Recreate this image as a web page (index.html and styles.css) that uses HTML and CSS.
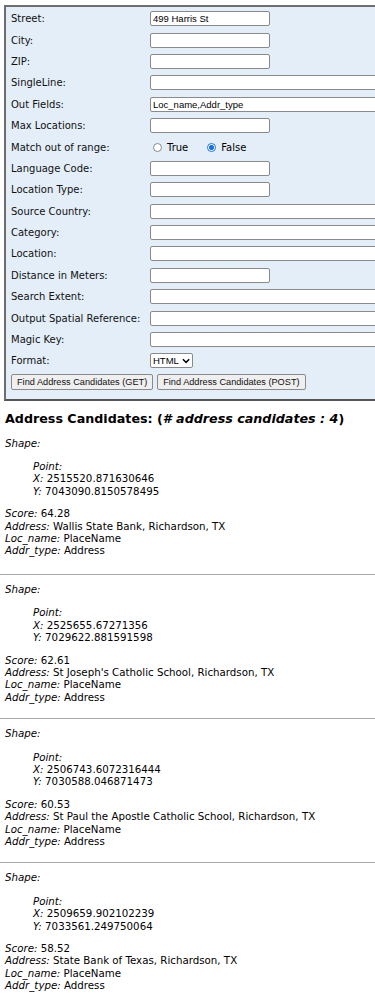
FILE: index.html
```html
<!DOCTYPE html>
<html>
<head>
<meta charset="utf-8">
<link rel="stylesheet" href="styles.css">
</head>
<body>
<div class="page">
<form class="form">
  <div class="row"><span class="lbl">Street:</span><input class="in short" value="499 Harris St"></div>
  <div class="row"><span class="lbl">City:</span><input class="in short"></div>
  <div class="row"><span class="lbl">ZIP:</span><input class="in short"></div>
  <div class="row"><span class="lbl">SingleLine:</span><input class="in long"></div>
  <div class="row"><span class="lbl">Out Fields:</span><input class="in long" value="Loc_name,Addr_type"></div>
  <div class="row"><span class="lbl">Max Locations:</span><input class="in short"></div>
  <div class="row"><span class="lbl">Match out of range:</span>
    <span class="radios"><label class="radio"><span class="dot"></span>True</label><label class="radio"><span class="dot on"></span>False</label></span></div>
  <div class="row"><span class="lbl">Language Code:</span><input class="in short"></div>
  <div class="row"><span class="lbl">Location Type:</span><input class="in short"></div>
  <div class="row"><span class="lbl">Source Country:</span><input class="in long"></div>
  <div class="row"><span class="lbl">Category:</span><input class="in long"></div>
  <div class="row"><span class="lbl">Location:</span><input class="in long"></div>
  <div class="row"><span class="lbl">Distance in Meters:</span><input class="in short"></div>
  <div class="row"><span class="lbl">Search Extent:</span><input class="in long"></div>
  <div class="row"><span class="lbl">Output Spatial Reference:</span><input class="in long"></div>
  <div class="row"><span class="lbl">Magic Key:</span><input class="in long"></div>
  <div class="row"><span class="lbl">Format:</span><span class="sel">HTML<svg class="chev" width="9" height="6" viewBox="0 0 9 6"><path d="M1 1 L4.5 4.5 L8 1" fill="none" stroke="#000" stroke-width="1.6"/></svg></span></div>
  <div class="btnrow"><span class="btn">Find Address Candidates (GET)</span><span class="btn">Find Address Candidates (POST)</span></div>
</form>

<h3 class="title">Address Candidates: (<i># address candidates : 4</i>)</h3>

<div class="cand first">
  <div><i>Shape:</i></div>
  <div class="pt"><i>Point:</i><br><i>X:</i> 2515520.871630646<br><i>Y:</i> 7043090.8150578495</div>
  <div class="attrs"><i>Score:</i> 64.28<br><i>Address:</i> Wallis State Bank, Richardson, TX<br><i>Loc_name:</i> PlaceName<br><i>Addr_type:</i> Address</div>
</div>
<hr class="sep">
<div class="cand">
  <div><i>Shape:</i></div>
  <div class="pt"><i>Point:</i><br><i>X:</i> 2525655.67271356<br><i>Y:</i> 7029622.881591598</div>
  <div class="attrs"><i>Score:</i> 62.61<br><i>Address:</i> St Joseph's Catholic School, Richardson, TX<br><i>Loc_name:</i> PlaceName<br><i>Addr_type:</i> Address</div>
</div>
<hr class="sep">
<div class="cand">
  <div><i>Shape:</i></div>
  <div class="pt"><i>Point:</i><br><i>X:</i> 2506743.6072316444<br><i>Y:</i> 7030588.046871473</div>
  <div class="attrs"><i>Score:</i> 60.53<br><i>Address:</i> St Paul the Apostle Catholic School, Richardson, TX<br><i>Loc_name:</i> PlaceName<br><i>Addr_type:</i> Address</div>
</div>
<hr class="sep">
<div class="cand">
  <div><i>Shape:</i></div>
  <div class="pt"><i>Point:</i><br><i>X:</i> 2509659.902102239<br><i>Y:</i> 7033561.249750064</div>
  <div class="attrs"><i>Score:</i> 58.52<br><i>Address:</i> State Bank of Texas, Richardson, TX<br><i>Loc_name:</i> PlaceName<br><i>Addr_type:</i> Address</div>
</div>
</div>
</body>
</html>
```

FILE: styles.css
```css
html, body { margin: 0; padding: 0; background: #fff; overflow-x: hidden; }
body { font-family: "DejaVu Sans", Verdana, sans-serif; font-size: 10px; color: #000; }
.page { padding: 5px 0 0 5px; width: 370px; overflow: hidden; }

.form {
  width: 420px;
  background: #e3eef8;
  border-top: 2px solid #6e6e6e;
  border-left: 2px solid #6e6e6e;
  border-bottom: 2px solid #555;
  margin-left: -1px;
  padding: 1px 0 7px 5px;
  box-sizing: border-box;
}
.row { display: grid; grid-template-columns: 139px 1fr; align-items: center; height: 21.4px; }
.lbl { color: #111; white-space: nowrap; }
.in {
  height: 15px; box-sizing: border-box;
  border: 1px solid #8a8a8a; border-radius: 2px; background: #fff;
  font-family: "Liberation Sans", Arial, sans-serif; font-size: 9.5px; color: #000;
  padding: 0 2px; margin: 0; outline: none;
}
.short { width: 120px; }
.long { width: 260px; }
.radios { display: flex; gap: 19px; padding-left: 3px; }
.radio { display: flex; align-items: center; gap: 5px; }
.dot { width: 9px; height: 9px; border-radius: 50%; border: 1px solid #888; box-sizing: border-box; background: #fff; }
.dot.on { border: 1px solid #1a73e8; background: radial-gradient(circle, #1a73e8 0 2.2px, #fff 2.8px); }
.sel {
  display: inline-flex; align-items: center; gap: 3px; width: 43px; height: 15px; box-sizing: border-box;
  border: 1px solid #8a8a8a; border-radius: 2px; background: #fff; padding: 0 2px;
  font-family: "Liberation Sans", Arial, sans-serif; font-size: 9.5px;
}
.btnrow { display: flex; gap: 4px; height: 20px; align-items: center; }
.btn {
  display: inline-flex; align-items: center; height: 16px; box-sizing: border-box;
  border: 1px solid #8a8a8a; border-radius: 2px; background: #efefef; padding: 0 5px;
  font-family: "Liberation Sans", Arial, sans-serif; font-size: 9.2px; color: #111;
}

.title { font-size: 12.7px; font-weight: bold; margin: 10px 0 10px 0; line-height: 16px; }
.cand { line-height: 12.4px; font-size: 10.25px; }
.pt { margin: 11px 0 10px 28px; }
.attrs { margin-bottom: 15px; }
.first .attrs { margin-bottom: 17px; }
.sep { border: 0; border-top: 1px solid #a9a9a9; height: 0; margin: 0 0 8px -5px; }
```
